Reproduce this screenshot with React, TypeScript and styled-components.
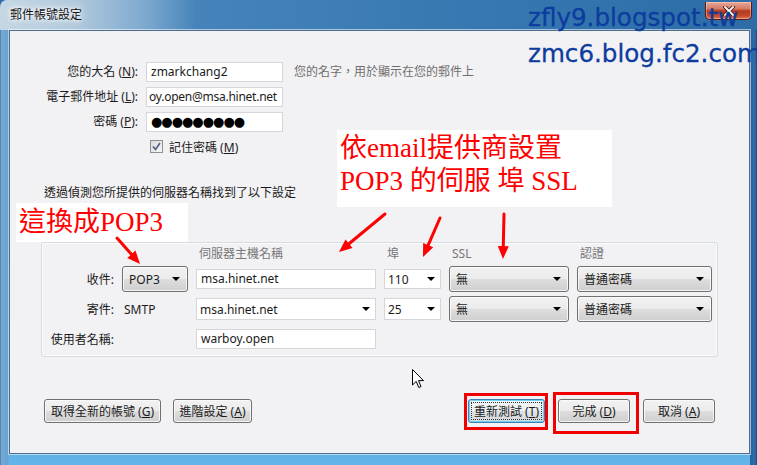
import React from "react";
import styled, { createGlobalStyle } from "styled-components";

const UI_FONT = `"Noto Sans", "Noto Sans CJK TC", sans-serif`;
const NOTE_FONT = `"Liberation Serif", "Noto Sans CJK TC", serif`;

const GlobalStyle = createGlobalStyle`
  html, body {
    margin: 0;
    padding: 0;
    background: #2d6ea8;
  }
  body {
    font-family: ${UI_FONT};
  }
`;

// 視窗外框
const Window = styled.div`
  position: relative;
  width: 757px;
  height: 465px;
  box-sizing: border-box;
  padding: 0 7px 11px 9px;
  display: flex;
  flex-direction: column;
  overflow: hidden;
  border-radius: 7px 7px 0 0;
  background:
    linear-gradient(90deg, #2f5f8e 0px, #76aad3 1px, #6aa3d0 8px, transparent 9px),
    linear-gradient(270deg, #1d4d7e 0px, #2f6aa5 2px, #2a64a0 7px, transparent 7px),
    linear-gradient(180deg, #3a78b0 0%, #3f84bd 55%, #56a9de 94%, #63b5ea 100%);
`;

const TitleBar = styled.div`
  height: 30px;
  margin: 0 -7px 0 -9px;
  padding-left: 10px;
  display: flex;
  align-items: flex-start;
  background: linear-gradient(
    90deg,
    #c6d7e4 0%,
    #b1c9dc 10%,
    #7eaad0 19%,
    #4583ba 26%,
    #3a7ab3 55%,
    #3273ad 80%,
    #2d6ca6 100%
  );
`;

const TitleText = styled.div`
  margin-top: 7px;
  font-family: ${UI_FONT};
  font-size: 12px;
  line-height: 16px;
  color: #111;
  text-shadow: 0 0 6px #fff, 0 0 3px #fff, 0 0 10px rgba(255, 255, 255, 0.8);
`;

const CloseButton = styled.div`
  margin: 2px 5px 0 auto;
  width: 47px;
  height: 18px;
  box-sizing: border-box;
  border: 1px solid #5a1b12;
  border-top: none;
  border-radius: 0 0 5px 5px;
  display: flex;
  align-items: center;
  justify-content: center;
  background: linear-gradient(
    180deg,
    #e6a899 0%,
    #d67a64 40%,
    #b8391f 52%,
    #c0462c 78%,
    #dc7550 100%
  );
  box-shadow: inset 0 0 0 1px rgba(255, 220, 210, 0.45);
`;

const Client = styled.div`
  flex: 1;
  display: flex;
  flex-direction: column;
  background: #f2f1f4;
  border: 1px solid #4e6d8d;
  box-shadow: 0 0 0 1px rgba(255, 255, 255, 0.55);
  font-family: ${UI_FONT};
  font-size: 12px;
  color: #1b1b1b;
`;

// 個人資料區
const IdentityGrid = styled.div`
  display: grid;
  grid-template-columns: 128px 137px auto;
  column-gap: 8px;
  row-gap: 5px;
  margin-top: 31px;
  align-items: center;
`;

const FieldLabel = styled.div`
  text-align: right;
  line-height: 20px;
  white-space: nowrap;
`;

const Hint = styled.div`
  margin-left: 3px;
  color: #6e6e6e;
  line-height: 20px;
  white-space: nowrap;
`;

const TextField = styled.div<{ $h?: number; $tight?: boolean }>`
  height: ${(p) => p.$h ?? 20}px;
  box-sizing: border-box;
  padding: 0 ${(p) => (p.$tight ? "1px 0 2px" : "4px")};
  border: 1px solid #d6d6da;
  background: #fff;
  line-height: ${(p) => (p.$h ?? 20) - 2}px;
  letter-spacing: ${(p) => (p.$tight ? "-0.25px" : "0")};
  white-space: nowrap;
  overflow: hidden;
`;

const Dots = styled.span`
  font-family: "DejaVu Sans", sans-serif;
  font-size: 13px;
  letter-spacing: -1px;
  color: #000;
`;

const CheckRow = styled.div`
  grid-column: 2 / 4;
  display: flex;
  align-items: center;
  gap: 6px;
  padding-left: 4px;
  height: 13px;
  margin-top: 3px;
  white-space: nowrap;
`;

const CheckBox = styled.span`
  width: 13px;
  height: 13px;
  box-sizing: border-box;
  border: 1px solid #8e8f8f;
  background: linear-gradient(135deg, #d8d9db, #f8f8f8);
  display: flex;
  align-items: center;
  justify-content: center;
`;

const DetectText = styled.div`
  margin-top: 32px;
  padding-left: 34px;
  line-height: 16px;
`;

// 伺服器設定群組
const GroupBox = styled.div`
  margin: 41px 0 0 31px;
  width: 677px;
  height: 115px;
  box-sizing: border-box;
  padding-top: 3px;
  border: 1px solid #d3dce3;
  border-radius: 3px;
  box-shadow: inset 0 0 0 1px #fbfbfc;
`;

const ServerGrid = styled.div`
  display: grid;
  grid-template-columns: 72px 66px 180px 57px 120px 135px;
  grid-template-rows: 16px 26px 26px 26px;
  column-gap: 8px;
  row-gap: 4px;
  align-items: center;
`;

const ColHead = styled.div`
  padding-left: 3px;
  color: #777;
  line-height: 16px;
  white-space: nowrap;
`;

const RowLabel = styled.div`
  text-align: right;
  white-space: nowrap;
`;

const PlainValue = styled.div`
  padding-left: 2px;
`;

const AeroSurface = `
  box-sizing: border-box;
  border: 1px solid #707070;
  border-radius: 3px;
  background: linear-gradient(180deg, #f2f2f2 0%, #ebebeb 48%, #dddddd 52%, #cfcfcf 100%);
  box-shadow: inset 0 0 0 1px rgba(252, 252, 252, 0.85);
`;

const SelectButton = styled.div`
  ${AeroSurface}
  height: 26px;
  padding: 0 7px 0 6px;
  display: flex;
  align-items: center;
  justify-content: space-between;
  white-space: nowrap;
`;

const ComboField = styled.div<{ $h?: number }>`
  height: ${(p) => p.$h ?? 20}px;
  box-sizing: border-box;
  border: 1px solid #d6d6da;
  background: #fff;
  padding: 0 5px 0 3px;
  display: flex;
  align-items: center;
  justify-content: space-between;
  white-space: nowrap;
`;

const DropArrow = styled.span`
  width: 0;
  height: 0;
  border-left: 4px solid transparent;
  border-right: 4px solid transparent;
  border-top: 4px solid #000;
`;

// 底部按鈕
const ButtonBar = styled.div`
  margin-top: 42px;
  padding: 0 34px;
  display: flex;
  align-items: center;
`;

const ButtonGroup = styled.div<{ $right?: boolean }>`
  display: flex;
  gap: ${(p) => (p.$right ? 13 : 12)}px;
  margin-left: ${(p) => (p.$right ? "auto" : "0")};
`;

const DialogButton = styled.div<{ $w: number; $focus?: boolean }>`
  ${AeroSurface}
  position: relative;
  width: ${(p) => p.$w}px;
  height: 24px;
  display: flex;
  align-items: center;
  justify-content: center;
  white-space: nowrap;
  ${(p) =>
    p.$focus
      ? `
    border-color: #3c7fb1;
    background: linear-gradient(180deg, #f4f6f7 0%, #eceff1 48%, #dfe3e6 52%, #d3d8dc 100%);
    box-shadow: inset 0 0 0 1px #6fd1f5;
    &::before {
      content: "";
      position: absolute;
      inset: 2px;
      border: 1px dotted #333;
    }
  `
      : ""}
`;

const Marked = styled.div<{ $t: number; $r: number; $b: number; $l: number }>`
  position: relative;
  &::after {
    content: "";
    position: absolute;
    top: ${(p) => -p.$t}px;
    right: ${(p) => -p.$r}px;
    bottom: ${(p) => -p.$b}px;
    left: ${(p) => -p.$l}px;
    border: 3px solid #f00000;
    pointer-events: none;
  }
`;

// 疊加在畫面上的標註
const Watermark = styled.div`
  position: absolute;
  left: 528px;
  top: 0;
  font-family: "DejaVu Sans", sans-serif;
  font-size: 24.6px;
  line-height: 36px;
  color: #0c3d9e;
  -webkit-text-stroke: 0.3px #0c3d9e;
  white-space: nowrap;
  pointer-events: none;
`;

const Note = styled.div<{ $x: number; $y: number; $w: number; $h: number; $size: number; $lh: number }>`
  position: absolute;
  left: ${(p) => p.$x}px;
  top: ${(p) => p.$y}px;
  width: ${(p) => p.$w}px;
  height: ${(p) => p.$h}px;
  box-sizing: border-box;
  padding: 2px 0 0 3px;
  background: #fff;
  color: #ff0000;
  font-family: ${NOTE_FONT};
  font-size: ${(p) => p.$size}px;
  line-height: ${(p) => p.$lh}px;
  white-space: nowrap;
  overflow: hidden;
`;

const Overlay = styled.svg`
  position: absolute;
  left: 0;
  top: 0;
  pointer-events: none;
`;

const Cursor = styled.svg`
  position: absolute;
  left: 412px;
  top: 369px;
`;

type Pt = [number, number];

const Arrow = ({ from, to }: { from: Pt; to: Pt }) => {
  const dx = to[0] - from[0];
  const dy = to[1] - from[1];
  const len = Math.hypot(dx, dy);
  const ux = dx / len;
  const uy = dy / len;
  const bx = to[0] - ux * 13;
  const by = to[1] - uy * 13;
  const px = -uy * 5.5;
  const py = ux * 5.5;
  return (
    <g>
      <line x1={from[0]} y1={from[1]} x2={bx + ux * 2} y2={by + uy * 2} stroke="#f00" strokeWidth={3} strokeLinecap="round" />
      <polygon points={`${to[0]},${to[1]} ${bx + px},${by + py} ${bx - px},${by - py}`} fill="#f00" />
    </g>
  );
};

const App = () => {
  return (
    <>
      <GlobalStyle />
      <Window>
        <TitleBar>
          <TitleText>郵件帳號設定</TitleText>
          <CloseButton>
            <svg width="12" height="10" viewBox="0 0 12 10">
              <path d="M2 1 L10 9 M10 1 L2 9" stroke="#3a1a16" strokeWidth="3.4" strokeLinecap="square" />
              <path d="M2 1 L10 9 M10 1 L2 9" stroke="#fff" strokeWidth="1.8" strokeLinecap="square" />
            </svg>
          </CloseButton>
        </TitleBar>

        <Client>
          <IdentityGrid>
            <FieldLabel>
              您的大名 (<u>N</u>):
            </FieldLabel>
            <TextField>zmarkchang2</TextField>
            <Hint>您的名字，用於顯示在您的郵件上</Hint>

            <FieldLabel>
              電子郵件地址 (<u>L</u>):
            </FieldLabel>
            <TextField $tight>oy.open@msa.hinet.net</TextField>
            <div />

            <FieldLabel>
              密碼 (<u>P</u>):
            </FieldLabel>
            <TextField>
              <Dots>●●●●●●●●●</Dots>
            </TextField>
            <div />

            <CheckRow>
              <CheckBox>
                <svg width="9" height="9" viewBox="0 0 9 9">
                  <path d="M1 4.5 L3.5 7.5 L8 1" fill="none" stroke="#4b5f82" strokeWidth="1.6" />
                </svg>
              </CheckBox>
              <span>
                記住密碼 (<u>M</u>)
              </span>
            </CheckRow>
          </IdentityGrid>

          <DetectText>透過偵測您所提供的伺服器名稱找到了以下設定</DetectText>

          <GroupBox>
            <ServerGrid>
              <div />
              <div />
              <ColHead>伺服器主機名稱</ColHead>
              <ColHead>埠</ColHead>
              <ColHead>SSL</ColHead>
              <ColHead>認證</ColHead>

              <RowLabel>收件:</RowLabel>
              <SelectButton>
                POP3 <DropArrow />
              </SelectButton>
              <TextField>msa.hinet.net</TextField>
              <ComboField>
                110 <DropArrow />
              </ComboField>
              <SelectButton>
                無 <DropArrow />
              </SelectButton>
              <SelectButton>
                普通密碼 <DropArrow />
              </SelectButton>

              <RowLabel>寄件:</RowLabel>
              <PlainValue>SMTP</PlainValue>
              <ComboField $h={22}>
                msa.hinet.net <DropArrow />
              </ComboField>
              <ComboField $h={22}>
                25 <DropArrow />
              </ComboField>
              <SelectButton>
                無 <DropArrow />
              </SelectButton>
              <SelectButton>
                普通密碼 <DropArrow />
              </SelectButton>

              <RowLabel>使用者名稱:</RowLabel>
              <div />
              <TextField>warboy.open</TextField>
            </ServerGrid>
          </GroupBox>

          <ButtonBar>
            <ButtonGroup>
              <DialogButton $w={117}>
                取得全新的帳號 (<u>G</u>)
              </DialogButton>
              <DialogButton $w={79}>
                進階設定 (<u>A</u>)
              </DialogButton>
            </ButtonGroup>
            <ButtonGroup $right>
              <Marked $t={6} $r={3} $b={7} $l={4}>
                <DialogButton $w={77} $focus>
                  重新測試 (<u>T</u>)
                </DialogButton>
              </Marked>
              <Marked $t={7} $r={9} $b={11} $l={5}>
                <DialogButton $w={72}>
                  完成 (<u>D</u>)
                </DialogButton>
              </Marked>
              <DialogButton $w={72}>
                取消 (<u>A</u>)
              </DialogButton>
            </ButtonGroup>
          </ButtonBar>
        </Client>

        <Watermark>
          zfly9.blogspot.tw
          <br />
          zmc6.blog.fc2.com
        </Watermark>

        <Note $x={16} $y={203} $w={172} $h={39} $size={27} $lh={34}>
          這換成POP3
        </Note>
        <Note $x={337} $y={130} $w={275} $h={77} $size={27} $lh={33}>
          依email提供商設置
          <br />
          POP3 的伺服 埠 SSL
        </Note>

        <Overlay width={757} height={465}>
          <Arrow from={[117, 238]} to={[140, 264]} />
          <Arrow from={[385, 214]} to={[339, 252]} />
          <Arrow from={[440, 218]} to={[423, 257]} />
          <Arrow from={[504, 214]} to={[503, 259]} />
        </Overlay>

        <Cursor width="13" height="20" viewBox="0 0 13 20">
          <path d="M0.5 0.5 L0.5 16 L4.2 12.4 L6.8 18.5 L9 17.6 L6.5 11.6 L11.5 11.6 Z" fill="#fff" stroke="#000" strokeWidth="1" />
        </Cursor>
      </Window>
    </>
  );
};

export default App;
